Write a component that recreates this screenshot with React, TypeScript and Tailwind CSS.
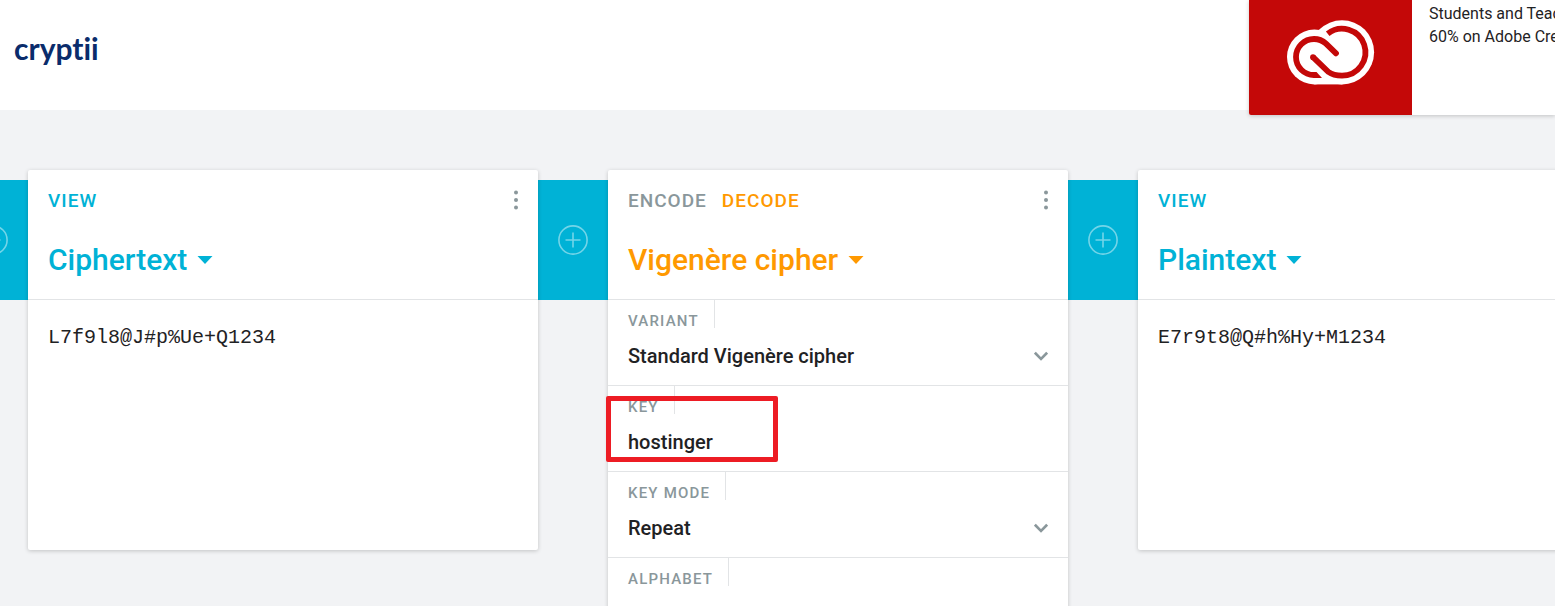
import React from "react";

function PlusIcon() {
  return (
    <svg width="30" height="30" viewBox="0 0 30 30" fill="none" stroke="#fff" strokeOpacity="0.45" strokeWidth="1.6" aria-hidden="true">
      <circle cx="15" cy="15" r="14.1" />
      <path d="M15 7.5v15M7.5 15h15" />
    </svg>
  );
}

function Connector({ clipped = false }: { clipped?: boolean }) {
  return (
    <div className={`mt-2.5 flex h-[120px] shrink-0 justify-end overflow-hidden bg-[#00b2d6] ${clipped ? "w-7" : "w-[70px]"}`}>
      <button type="button" aria-label="Add brick" className="flex w-[70px] shrink-0 items-center justify-center">
        <PlusIcon />
      </button>
    </div>
  );
}

function MenuButton() {
  return (
    <button type="button" aria-label="Brick menu" className="flex h-5 w-5 items-center justify-center">
      <svg width="4" height="20" viewBox="0 0 4 20" fill="#8a979b" aria-hidden="true">
        <circle cx="2" cy="2.5" r="2" />
        <circle cx="2" cy="10" r="2" />
        <circle cx="2" cy="17.5" r="2" />
      </svg>
    </button>
  );
}

type CardProps = {
  modes: { label: string; active?: boolean }[];
  title: string;
  tone: "blue" | "orange";
  className: string;
  children: React.ReactNode;
};

function Card({ modes, title, tone, className, children }: CardProps) {
  const color = tone === "blue" ? "text-[#00b2d6]" : "text-[#ff9900]";
  return (
    <section className={`relative shrink-0 rounded-xs bg-white shadow-[0_1px_4px_rgba(0,0,0,0.2)] ${className}`}>
      <header className="flex h-[130px] flex-col border-b border-[#e2e4e6] pt-5 pl-5 pr-3">
        <div className="flex h-5 items-center justify-between">
          <div className="flex gap-[15px]">
            {modes.map((m) => (
              <button key={m.label} type="button" className={`pt-px text-[19px] leading-5 font-medium tracking-[1px] ${m.active ? color : "text-[#8a979b]"}`}>
                {m.label}
              </button>
            ))}
          </div>
          <MenuButton />
        </div>
        <h2 className="mt-7">
          <button type="button" className={`flex items-center gap-2.5 text-[30px] leading-11 font-medium ${color}`}>
            {title}
            <svg width="16" height="8" viewBox="0 0 16 8" fill="currentColor" aria-hidden="true">
              <path d="M0.500 0h15L8 8z" />
            </svg>
          </button>
        </h2>
      </header>
      {children}
    </section>
  );
}

const labelClass =
  "flex h-7 w-fit items-center border-r border-[#e2e4e6] pt-3.5 pr-[15px] text-[15px] leading-4 font-medium tracking-[0.08em] text-[#8a979b]";
const valueClass = "w-full appearance-none bg-transparent text-xl leading-6 font-medium text-[#1f2224] outline-none";

function Setting({ id, label, value, select = false, marked = false }: { id: string; label: string; value: string; select?: boolean; marked?: boolean }) {
  return (
    <div className="relative h-[86px] border-b border-[#e2e4e6] pl-5 pr-5">
      <label htmlFor={id} className={labelClass}>
        {label}
      </label>
      <div className="mt-4 flex items-center">
        {select ? (
          <>
            <select id={id} className={valueClass} defaultValue={value}>
              <option>{value}</option>
            </select>
            <svg className="pointer-events-none shrink-0" width="14" height="10" viewBox="0 0 14 10" fill="none" stroke="#8a979b" strokeWidth="2.6" aria-hidden="true">
              <path d="M0.9 1.7 7 7.8l6.1-6.1" />
            </svg>
          </>
        ) : (
          <input id={id} className={valueClass} defaultValue={value} />
        )}
      </div>
      {marked && <div className="pointer-events-none absolute top-2.5 -left-0.5 h-[66px] w-[172px] rounded-xs border-5 border-[#ed1c24]" />}
    </div>
  );
}

function TextView({ label, value }: { label: string; value: string }) {
  return (
    <textarea
      aria-label={label}
      defaultValue={value}
      spellCheck={false}
      className="block h-[250px] w-full resize-none bg-transparent px-5 py-6 font-['Liberation_Mono',monospace] text-xl leading-7 text-[#1f2224] outline-none"
    />
  );
}

function CloudLogo() {
  return (
    <svg width="88" height="65" viewBox="0 0 88 65" fill="none" aria-hidden="true">
      <circle cx="27.4" cy="37" r="27.4" fill="#fff" />
      <circle cx="55" cy="32.3" r="32.1" fill="#fff" />
      <path d="M27.4 40h28v24.4h-28z" fill="#fff" />
      <g stroke="#c40808" strokeWidth="5.8">
        <path strokeLinecap="round" d="M49 33.300 39 23.700C35.500 20.500 32 19 27 19A18 18 0 0 0 27 55" />
        <path d="M26 37.200 41.500 52C45.500 55 49.500 55.600 55 55.600A23.400 23.400 0 1 0 40.700 13.700" />
      </g>
      <circle cx="26" cy="37.200" r="2.9" fill="#c40808" />
      <path d="M26.500 52.100h3l5.500 5.800h-8.500z" fill="#c40808" />
    </svg>
  );
}

export default function App() {
  return (
    <div className="h-screen overflow-hidden bg-[#f2f3f5] font-[Roboto,sans-serif]">
      <header className="flex h-[110px] items-start justify-between bg-white">
        <a href="#" className="pt-7 pl-3.5 font-[Lato,sans-serif] text-[30px] leading-10 font-bold text-[#0a2c6b] [font-variant-ligatures:none]">
          cryptii
        </a>
        <a href="#" className="flex h-[115px] w-[306px] shrink-0 overflow-hidden rounded-bl-xs bg-white shadow-[0_1px_4px_rgba(0,0,0,0.2)]">
          <span className="flex w-[163px] shrink-0 justify-center bg-[#c40808] pt-5">
            <CloudLogo />
          </span>
          <span className="shrink-0 pt-0.5 pl-[17px] text-base leading-[23px] whitespace-nowrap text-[#1f2224]">
            Students and Teachers
            <br />
            60% on Adobe Creative
          </span>
        </a>
      </header>

      <main className="flex items-start pt-15">
        <Connector clipped />
        <Card modes={[{ label: "VIEW", active: true }]} title="Ciphertext" tone="blue" className="w-[510px]">
          <TextView label="Ciphertext" value="L7f9l8@J#p%Ue+Q1234" />
        </Card>
        <Connector />
        <Card modes={[{ label: "ENCODE" }, { label: "DECODE", active: true }]} title="Vigenère cipher" tone="orange" className="w-[460px]">
          <Setting id="variant" label="VARIANT" value="Standard Vigenère cipher" select />
          <Setting id="key" label="KEY" value="hostinger" marked />
          <Setting id="key-mode" label="KEY MODE" value="Repeat" select />
          <Setting id="alphabet" label="ALPHABET" value="abcdefghijklmnopqrstuvwxyz" />
        </Card>
        <Connector />
        <Card modes={[{ label: "VIEW", active: true }]} title="Plaintext" tone="blue" className="w-[510px]">
          <TextView label="Plaintext" value="E7r9t8@Q#h%Hy+M1234" />
        </Card>
      </main>
    </div>
  );
}
